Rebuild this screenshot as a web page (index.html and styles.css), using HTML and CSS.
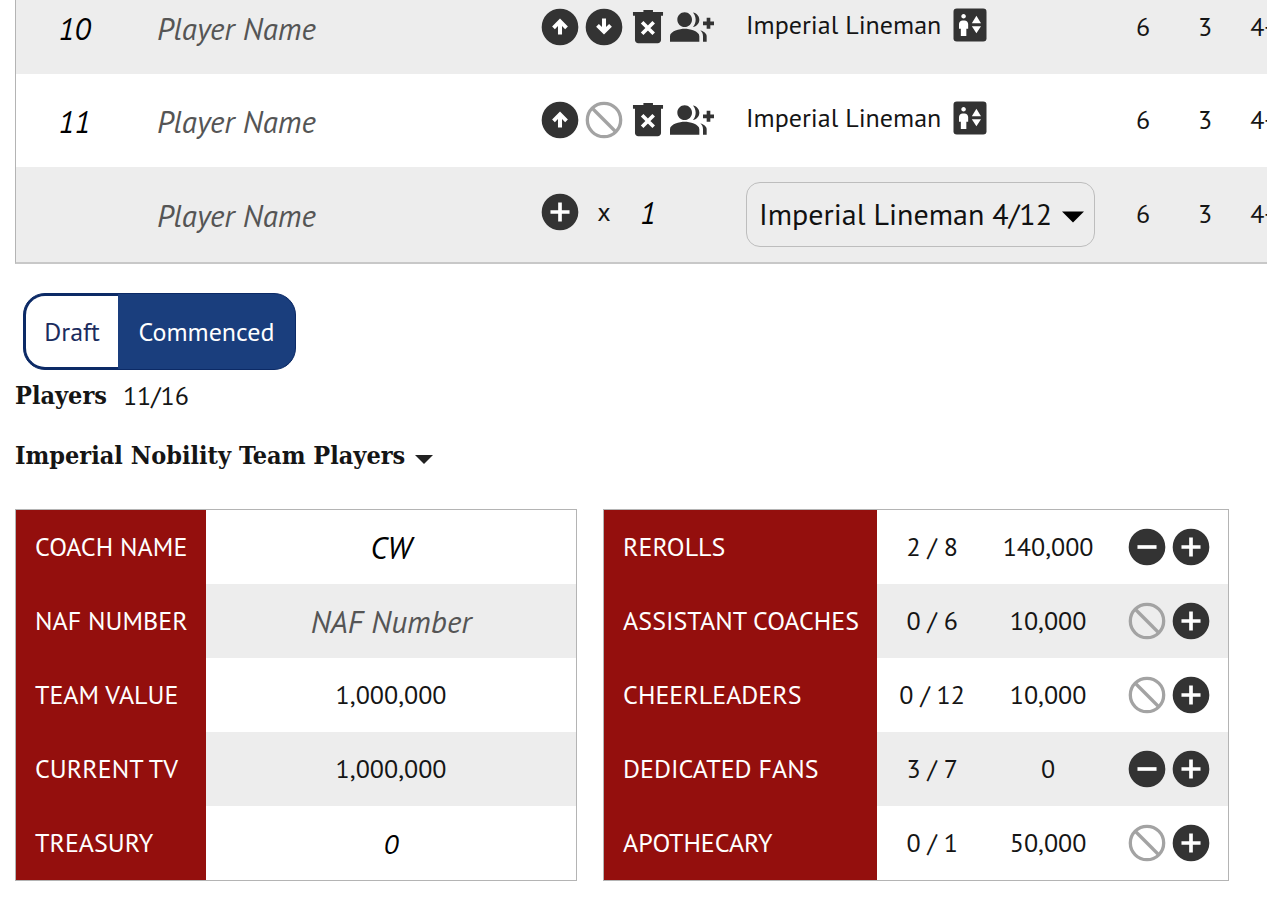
FILE: index.html
```html
<!DOCTYPE html>
<html lang="en">
<head>
<meta charset="utf-8">
<meta name="viewport" content="width=device-width, initial-scale=1">
<title>Imperial Nobility Team Roster</title>
<link rel="stylesheet" href="styles.css">
</head>
<body>
<svg class="sprite" aria-hidden="true">
  <symbol id="up" viewBox="0 0 24 24"><circle cx="12" cy="12" r="10"/><path class="cut" d="M10.9 16.1v-4.600l-1.700 1.700-1.500-1.500L12 7.400l4.300 4.300-1.500 1.500-1.700-1.700v4.600z"/></symbol>
  <symbol id="down" viewBox="0 0 24 24"><circle cx="12" cy="12" r="10"/><path class="cut" d="M10.9 7.400V12l-1.700-1.700-1.500 1.500L12 16.100l4.300-4.300-1.500-1.500-1.700 1.700V7.400z"/></symbol>
  <symbol id="plus" viewBox="0 0 24 24"><circle cx="12" cy="12" r="10"/><path class="cut" d="M11 6.800h2V11h4.200v2H13v4.200h-2V13H6.800v-2H11z"/></symbol>
  <symbol id="minus" viewBox="0 0 24 24"><circle cx="12" cy="12" r="10"/><path class="cut" d="M6.800 11h10.400v2H6.800z"/></symbol>
  <symbol id="none" viewBox="0 0 24 24"><g fill="none" stroke="#a3a3a3" stroke-width="1.800"><circle cx="12" cy="12" r="9.100"/><path d="M5.600 5.600l12.800 12.800"/></g></symbol>
  <symbol id="trash" viewBox="0 0 24 24"><path d="M9.500 2.700h5.200v1.100h5.500v2h-1.100v13.300c0 1-.8 1.800-1.800 1.800H6.700c-1 0-1.800-.8-1.800-1.800V5.800H3.800v-2h5.700z"/><path d="M8.800 9.400l6.300 6.300m0-6.300l-6.300 6.300" class="cross"/></symbol>
  <symbol id="group" viewBox="0 0 24 24"><path d="M22 9V7h-2v2h-2v2h2v2h2v-2h2V9zM8 12c2.210 0 4-1.790 4-4s-1.790-4-4-4-4 1.790-4 4 1.790 4 4 4zm0 1c-2.670 0-8 1.340-8 4v3h16v-3c0-2.660-5.330-4-8-4zm4.510-8.950C13.430 5.110 14 6.490 14 8s-.57 2.890-1.490 3.950C14.470 11.700 16 10.040 16 8s-1.530-3.700-3.490-3.950zm4.020 9.780C17.420 14.660 18 15.700 18 17v3h2v-3c0-1.450-1.590-2.510-3.470-3.170z"/></symbol>
  <symbol id="swap" viewBox="0 0 24 24"><rect x="3" y="3" width="18" height="18" rx="1.800"/><path class="cut" d="M8.500 6c.69 0 1.250.56 1.250 1.250S9.190 8.500 8.500 8.500s-1.250-.56-1.250-1.250S7.810 6 8.500 6zm2.500 8h-1v4H7v-4H6v-2.500c0-1.100.9-2 2-2h1c1.100 0 2 .9 2 2V14zm4.500 2.500L13 12.700h5zM13 11l2.500-4 2.500 4z"/></symbol>
</svg>

<main class="page">
  <div class="roster-scroll">
    <table class="roster">
      <colgroup><col class="c-num"><col class="c-name"><col class="c-act"><col class="c-pos"><col class="c-stat"><col class="c-stat"><col class="c-last"></colgroup>
      <tbody>
        <tr>
          <td class="name-cell"><input class="field number" aria-label="Player number" value="10"></td>
          <td class="name"><input class="field" aria-label="Name of player 10" placeholder="Player Name"></td>
          <td><div class="actions">
            <button class="icon" aria-label="Move up"><svg><use href="#up"/></svg></button>
            <button class="icon" aria-label="Move down"><svg><use href="#down"/></svg></button>
            <button class="icon" aria-label="Delete player"><svg><use href="#trash"/></svg></button>
            <button class="icon" aria-label="Duplicate player"><svg><use href="#group"/></svg></button>
          </div></td>
          <td><div class="position"><span>Imperial Lineman</span><button class="icon" aria-label="Change position"><svg><use href="#swap"/></svg></button></div></td>
          <td class="stat">6</td><td class="stat">3</td><td class="stat">4+</td>
        </tr>
        <tr>
          <td class="name-cell"><input class="field number" aria-label="Player number" value="11"></td>
          <td class="name"><input class="field" aria-label="Name of player 11" placeholder="Player Name"></td>
          <td><div class="actions">
            <button class="icon" aria-label="Move up"><svg><use href="#up"/></svg></button>
            <button class="icon" aria-label="Move down" disabled><svg><use href="#none"/></svg></button>
            <button class="icon" aria-label="Delete player"><svg><use href="#trash"/></svg></button>
            <button class="icon" aria-label="Duplicate player"><svg><use href="#group"/></svg></button>
          </div></td>
          <td><div class="position"><span>Imperial Lineman</span><button class="icon" aria-label="Change position"><svg><use href="#swap"/></svg></button></div></td>
          <td class="stat">6</td><td class="stat">3</td><td class="stat">4+</td>
        </tr>
        <tr class="new-player">
          <td></td>
          <td class="name"><input class="field" aria-label="Name of new player" placeholder="Player Name"></td>
          <td><div class="actions">
            <button class="icon" aria-label="Add player"><svg><use href="#plus"/></svg></button>
            <label class="times" for="quantity">x</label>
            <input class="field quantity" id="quantity" value="1">
          </div></td>
          <td><div class="select-wrap">
            <select class="select" aria-label="Position"><option>Imperial Lineman 4/12</option></select>
            <svg class="caret" viewBox="0 0 22 11"><path d="M0 0h22L11 11z"/></svg>
          </div></td>
          <td class="stat">6</td><td class="stat">3</td><td class="stat">4+</td>
        </tr>
      </tbody>
    </table>
  </div>

  <div class="toggle">
    <button class="toggle-option" aria-pressed="false">Draft</button>
    <button class="toggle-option active" aria-pressed="true">Commenced</button>
  </div>

  <div class="summary"><h2 class="heading">Players</h2><span>11/16</span></div>
  <h2 class="heading team"><button class="disclosure" aria-expanded="false">Imperial Nobility Team Players <svg class="caret-small" viewBox="0 0 18 9"><path d="M0 0h18L9 9z"/></svg></button></h2>

  <div class="panels">
    <table class="panel details">
      <colgroup><col class="c-label"><col></colgroup>
      <tbody>
        <tr><th scope="row"><label for="coach">COACH NAME</label></th><td><input class="field center" id="coach" value="CW"></td></tr>
        <tr><th scope="row"><label for="naf">NAF NUMBER</label></th><td><input class="field center" id="naf" placeholder="NAF Number"></td></tr>
        <tr><th scope="row">TEAM VALUE</th><td>1,000,000</td></tr>
        <tr><th scope="row">CURRENT TV</th><td>1,000,000</td></tr>
        <tr><th scope="row"><label for="treasury">TREASURY</label></th><td><input class="field center amount" id="treasury" value="0"></td></tr>
      </tbody>
    </table>

    <table class="panel extras">
      <colgroup><col class="c-extra"><col class="c-count"><col class="c-cost"><col></colgroup>
      <tbody>
        <tr><th scope="row">REROLLS</th><td>2 / 8</td><td>140,000</td><td><div class="steps"><button class="icon" aria-label="Remove reroll"><svg><use href="#minus"/></svg></button><button class="icon" aria-label="Add reroll"><svg><use href="#plus"/></svg></button></div></td></tr>
        <tr><th scope="row">ASSISTANT COACHES</th><td>0 / 6</td><td>10,000</td><td><div class="steps"><button class="icon" aria-label="Remove assistant coach" disabled><svg><use href="#none"/></svg></button><button class="icon" aria-label="Add assistant coach"><svg><use href="#plus"/></svg></button></div></td></tr>
        <tr><th scope="row">CHEERLEADERS</th><td>0 / 12</td><td>10,000</td><td><div class="steps"><button class="icon" aria-label="Remove cheerleader" disabled><svg><use href="#none"/></svg></button><button class="icon" aria-label="Add cheerleader"><svg><use href="#plus"/></svg></button></div></td></tr>
        <tr><th scope="row">DEDICATED FANS</th><td>3 / 7</td><td>0</td><td><div class="steps"><button class="icon" aria-label="Remove dedicated fan"><svg><use href="#minus"/></svg></button><button class="icon" aria-label="Add dedicated fan"><svg><use href="#plus"/></svg></button></div></td></tr>
        <tr><th scope="row">APOTHECARY</th><td>0 / 1</td><td>50,000</td><td><div class="steps"><button class="icon" aria-label="Remove apothecary" disabled><svg><use href="#none"/></svg></button><button class="icon" aria-label="Add apothecary"><svg><use href="#plus"/></svg></button></div></td></tr>
      </tbody>
    </table>
  </div>
</main>
</body>
</html>
```
FILE: styles.css
```css
* { box-sizing: border-box; }

body {
  margin: 0;
  background: #fff;
  color: #151515;
  font: 26px/32px "PT Sans", "Noto Sans CJK SC", sans-serif;
}

button, select, input { font: inherit; color: inherit; margin: 0; }
button { padding: 0; border: 0; background: none; cursor: pointer; }
button:disabled { cursor: default; }

.sprite { position: absolute; width: 0; height: 0; }
.cut { fill: #fff; }
.cross { stroke: #fff; stroke-width: 2; }

.page { overflow: hidden; padding-left: 15px; }

table { border-collapse: separate; border-spacing: 0; table-layout: fixed; }
td, th { padding: 0; font-weight: 400; }

.icon { display: block; flex: none; width: 44px; height: 44px; }
.icon svg { display: block; width: 44px; height: 44px; fill: #333; }

.field {
  display: block;
  width: 100%;
  height: 48px;
  padding: 0;
  border: 0;
  background: transparent;
  color: #000;
  font: italic 31px/40px "PT Sans", "Open Sans", sans-serif;
}
.field::placeholder { color: #555; opacity: 1; }
.center { text-align: center; }
.amount { font-size: 28px; }

/* Player rows */
.roster-scroll {
  margin-right: 13px;
  overflow: hidden;
  border-left: 1px solid #b4b4b4;
  border-bottom: 2px solid #c8c8c8;
}
.roster { width: 1276px; min-width: 100%; margin-top: -19px; }
.roster td { height: 93px; padding-bottom: 1px; }
.roster .new-player td { height: 95px; }
.roster tr:nth-child(odd) { background: #ededed; }
.c-num { width: 117px; }
.c-name { width: 405px; }
.c-act { width: 208px; }
.c-pos { width: 366px; }
.c-stat { width: 62px; }
.c-last { width: 56px; }
.number { text-align: center; }
.roster .name-cell { padding-top: 2px; }
.roster .name { padding-left: 24px; padding-top: 2px; }
.stat { text-align: center; }
.actions { display: flex; align-items: center; }
.new-player .actions { padding-bottom: 4px; }
.times { width: 44px; text-align: center; }
.quantity { width: 44px; text-align: center; }
.position { display: flex; align-items: center; gap: 7px; padding-bottom: 4px; }
.select-wrap { position: relative; width: 349px; }
.select {
  display: block;
  width: 100%;
  height: 65px;
  padding: 0 44px 0 12px;
  border: 1px solid #bdbdbd;
  border-radius: 14px;
  appearance: none;
  background: transparent;
  color: #111;
  font-size: 30px;
}
.caret { position: absolute; right: 11px; top: 29px; width: 22px; height: 12px; pointer-events: none; }

/* Stage toggle */
.toggle {
  display: flex;
  width: max-content;
  height: 77px;
  margin: 29px 0 0 8px;
  overflow: hidden;
  border: 1px solid #0c2a66;
  border-radius: 22px;
  background: #0c2a66;
}
.toggle-option {
  width: 94px;
  border: 2px solid #0c2a66;
  border-right: 0;
  border-radius: 21px 0 0 21px;
  background: #fff;
  color: #1b2c5e;
}
.toggle-option.active { width: 177px; border: 0; border-radius: 0; background: #1a3e7d; color: #fff; }

.heading { margin: 0; font: 700 25px/32px "Roboto Slab", "DejaVu Serif Condensed", "DejaVu Serif", serif; }
.summary { display: flex; align-items: center; gap: 16px; margin-top: 10px; }
.team { margin-top: 28px; }
.disclosure { display: flex; align-items: center; gap: 10px; }
.caret-small { width: 18px; height: 9px; margin-top: 6px; fill: #222; }

/* Team details */
.panels { display: flex; align-items: flex-start; gap: 26px; margin: 37px 51px 0 0; }
.panel { border: 1px solid #b4b4b4; }
.details { flex: 562 1 0; }
.extras { flex: 626 1 0; }
.panel td { height: 74px; text-align: center; }
.panel tr:nth-child(even) { background: #ededed; }
.panel th { padding-left: 19px; background: #940f0d; color: #fff; text-align: left; white-space: nowrap; }
.c-label { width: 190px; }
.c-extra { width: 273px; }
.c-count { width: 110px; }
.c-cost { width: 122px; }
.steps { display: flex; justify-content: center; }
```
